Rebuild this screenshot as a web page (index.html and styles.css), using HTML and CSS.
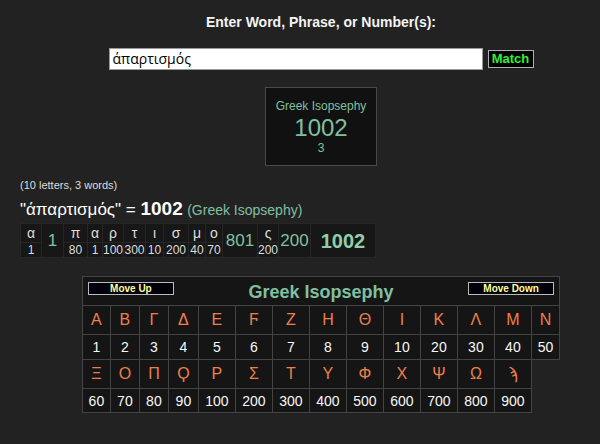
FILE: index.html
```html
<!DOCTYPE html>
<html>
<head>
<meta charset="utf-8">
<link rel="stylesheet" href="styles.css">
</head>
<body>
<div class="page">
  <div class="center">
    <div class="title">Enter Word, Phrase, or Number(s):</div>
    <div class="search">
      <div class="input">άπαρτισμός</div>
      <div class="match">Match</div>
    </div>
    <div class="summary">
      <div class="sum-name">Greek Isopsephy</div>
      <div class="sum-value">1002</div>
      <div class="sum-count">3</div>
    </div>
  </div>
  <div class="info">(10 letters, 3 words)</div>
  <div class="formula"><span class="quote">"άπαρτισμός" = </span><span class="total">1002</span> <span class="cipher">(Greek Isopsephy)</span></div>
  <table class="breakdown">
    <colgroup>
      <col class="b1"><col class="b2"><col class="b3"><col class="b4"><col class="b5"><col class="b6"><col class="b7"><col class="b8"><col class="b9"><col class="b10"><col class="b11"><col class="b12"><col class="b13"><col class="b14">
    </colgroup>
    <tr class="lrow">
      <td>α</td><td rowspan="2" class="wsum">1</td>
      <td>π</td><td>α</td><td>ρ</td><td>τ</td><td>ι</td><td>σ</td><td>μ</td><td>ο</td>
      <td rowspan="2" class="wsum">801</td>
      <td>ς</td><td rowspan="2" class="wsum">200</td>
      <td rowspan="2" class="gsum">1002</td>
    </tr>
    <tr class="vrow">
      <td>1</td>
      <td>80</td><td>1</td><td>100</td><td>300</td><td>10</td><td>200</td><td>40</td><td>70</td>
      <td>200</td>
    </tr>
  </table>
  <div class="center">
    <table class="chart">
      <colgroup>
        <col class="n"><col class="n1"><col class="n1"><col class="n2"><col class="w"><col class="w"><col class="w"><col class="w"><col class="w"><col class="w"><col class="w"><col class="w"><col class="w"><col class="n">
      </colgroup>
      <tr class="head">
        <td colspan="14">
          <div class="headbar">
            <div class="btn">Move Up</div>
            <div class="chart-title">Greek Isopsephy</div>
            <div class="btn">Move Down</div>
          </div>
        </td>
      </tr>
      <tr class="letters">
        <td>Α</td><td>Β</td><td>Γ</td><td>Δ</td><td>Ε</td><td>Ϝ</td><td>Ζ</td><td>Η</td><td>Θ</td><td>Ι</td><td>Κ</td><td>Λ</td><td>Μ</td><td>Ν</td>
      </tr>
      <tr class="nums">
        <td>1</td><td>2</td><td>3</td><td>4</td><td>5</td><td>6</td><td>7</td><td>8</td><td>9</td><td>10</td><td>20</td><td>30</td><td>40</td><td>50</td>
      </tr>
      <tr class="letters">
        <td>Ξ</td><td>Ο</td><td>Π</td><td>Ϙ</td><td>Ρ</td><td>Σ</td><td>Τ</td><td>Υ</td><td>Φ</td><td>Χ</td><td>Ψ</td><td>Ω</td><td>ϡ</td>
      </tr>
      <tr class="nums last">
        <td>60</td><td>70</td><td>80</td><td>90</td><td>100</td><td>200</td><td>300</td><td>400</td><td>500</td><td>600</td><td>700</td><td>800</td><td>900</td>
      </tr>
    </table>
  </div>
</div>
</body>
</html>
```
FILE: styles.css
```css
html, body {
  margin: 0;
  padding: 0;
  background: #222222;
  overflow: hidden;
}
body {
  font-family: "Liberation Sans", "DejaVu Sans", sans-serif;
  color: #ffffff;
}
.page {
  width: 600px;
  height: 444px;
  padding-top: 14px;
  box-sizing: border-box;
}
.center {
  width: 560px;
  margin-left: 41px;
}
.title {
  height: 16px;
  line-height: 16px;
  font-size: 14px;
  font-weight: bold;
  text-align: center;
  color: #f4f4f4;
}
.search {
  display: flex;
  justify-content: center;
  align-items: center;
  gap: 5px;
  margin-top: 18px;
  height: 22px;
}
.input {
  box-sizing: border-box;
  width: 374px;
  height: 22px;
  background: #ffffff;
  border: 1px solid #9a9a9a;
  color: #000000;
  font-size: 14px;
  line-height: 20px;
  padding-left: 3px;
  font-family: "Open Sans", "DejaVu Sans", sans-serif;
}
.match {
  box-sizing: border-box;
  width: 46px;
  height: 18px;
  background: #000000;
  border: 1px solid #b0b0b0;
  color: #33ee33;
  font-weight: bold;
  font-size: 13px;
  line-height: 16px;
  text-align: center;
}
.summary {
  box-sizing: border-box;
  width: 112px;
  height: 79px;
  margin: 17px auto 0;
  background: #111111;
  border: 1px solid #4a4a4a;
  text-align: center;
  color: #80c0a0;
  padding-top: 11px;
}
.sum-name {
  font-size: 12px;
  line-height: 14px;
}
.sum-value {
  font-size: 24px;
  line-height: 26px;
  margin-top: 2px;
}
.sum-count {
  font-size: 12px;
  line-height: 14px;
}
.info {
  margin: 13px 0 0 20px;
  font-size: 11px;
  line-height: 13px;
  color: #dddddd;
}
.formula {
  margin: 7px 0 0 20px;
  height: 20px;
  line-height: 20px;
  white-space: nowrap;
}
.quote {
  font-size: 17px;
  color: #ffffff;
}
.total {
  font-size: 19px;
  font-weight: bold;
  color: #ffffff;
}
.cipher {
  font-size: 14px;
  color: #80c0a0;
}
.breakdown {
  margin: 4px 0 0 20px;
  border-collapse: collapse;
  table-layout: fixed;
  width: 355px;
}
.breakdown td {
  background: #171717;
  border: 1px solid #262626;
  padding: 0;
  text-align: center;
  color: #dddddd;
}
.lrow td {
  height: 18px;
  font-size: 14px;
  line-height: 18px;
}
.vrow td {
  height: 14px;
  font-size: 12px;
  line-height: 14px;
}
.breakdown td.wsum {
  font-size: 17px;
  color: #80c0a0;
}
.breakdown td.gsum {
  font-size: 20px;
  font-weight: bold;
  color: #8fd0a8;
}
.b1 { width: 21px; }
.b2 { width: 22px; }
.b3 { width: 24px; }
.b4 { width: 15px; }
.b5 { width: 21px; }
.b6 { width: 22px; }
.b7 { width: 18px; }
.b8 { width: 25px; }
.b9 { width: 17px; }
.b10 { width: 17px; }
.b11 { width: 35px; }
.b12 { width: 21px; }
.b13 { width: 32px; }
.b14 { width: 65px; }
.chart {
  margin: 18px auto 0;
  border-collapse: collapse;
  table-layout: fixed;
  width: 477px;
}
.chart .n { width: 28px; }
.chart .n1 { width: 29px; }
.chart .n2 { width: 30px; }
.chart .w { width: 37px; }
.chart td {
  background: #151515;
  border: 1px solid #444444;
  padding: 0;
  text-align: center;
}
.head td {
  height: 28px;
}
.headbar {
  display: flex;
  justify-content: space-between;
  align-items: flex-start;
  padding: 0 5px;
  height: 28px;
}
.btn {
  box-sizing: border-box;
  width: 86px;
  height: 13px;
  margin-top: 5px;
  background: #00000a;
  border: 1px solid #bbbbbb;
  color: #ffff99;
  font-size: 10px;
  font-weight: bold;
  line-height: 11px;
  text-align: center;
}
.chart-title {
  font-size: 18px;
  font-weight: bold;
  color: #80c0a0;
  line-height: 30px;
}
.letters td {
  height: 28px;
  font-size: 16px;
  color: #ee7f4c;
}
.nums td {
  height: 24px;
  font-size: 14px;
  color: #f8f8f8;
}
.nums.last td {
  height: 23px;
}
```
